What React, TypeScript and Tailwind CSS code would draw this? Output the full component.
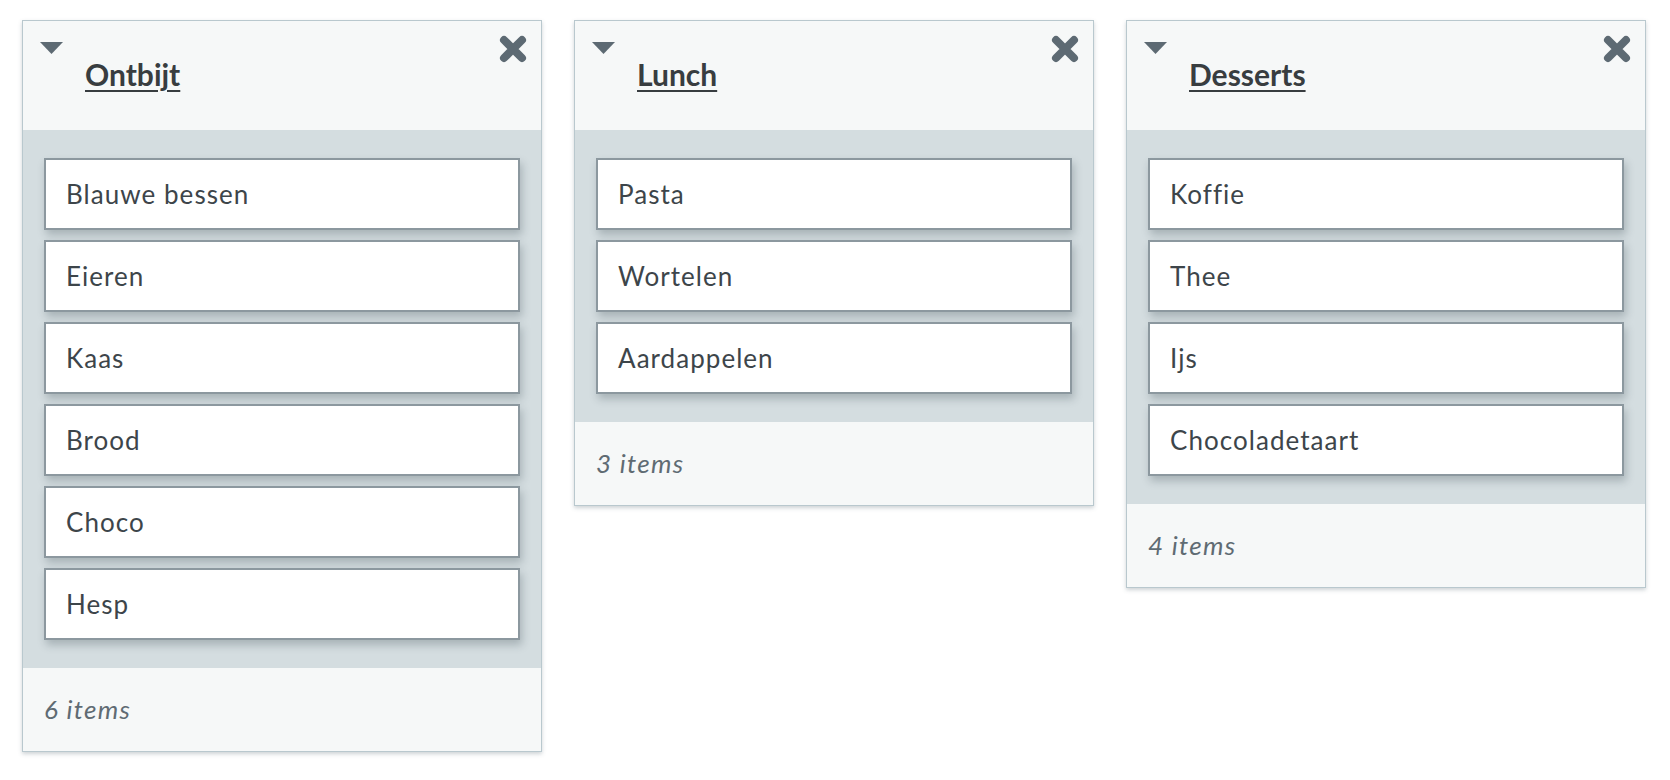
type Column = { id: string; title: string; items: string[] };

const columns: Column[] = [
  { id: "ontbijt", title: "Ontbijt", items: ["Blauwe bessen", "Eieren", "Kaas", "Brood", "Choco", "Hesp"] },
  { id: "lunch", title: "Lunch", items: ["Pasta", "Wortelen", "Aardappelen"] },
  { id: "desserts", title: "Desserts", items: ["Koffie", "Thee", "Ijs", "Chocoladetaart"] },
];

export default function App() {
  return (
    <main className="min-h-screen bg-white font-['Lato',sans-serif] text-[#3d454a]">
      <div className="flex items-start gap-[32px] pl-[22px] pt-[20px]">
        {columns.map((column) => (
          <ColumnCard column={column} key={column.id} />
        ))}
      </div>
    </main>
  );
}

function ColumnCard({ column }: { column: Column }) {
  return (
    <section className="w-[520px] border border-[#b9c8ce] bg-[#f6f8f8] shadow-[0_2px_4px_rgba(60,80,90,0.25)]">
      <header className="flex h-[109px] items-start">
        <button className="ml-[17px] mt-[21px] text-[#5d6a73]" aria-label="Inklappen">
          <svg width="23" height="12" viewBox="0 0 23 12" aria-hidden="true">
            <path d="M0 0H23L11.5 12Z" fill="currentColor" />
          </svg>
        </button>
        <h2 className="ml-[22px] mt-[35px] text-[30px] font-bold leading-[36px] text-[#383d40] underline decoration-2 underline-offset-[4px]">
          {column.title}
        </h2>
        <button className="ml-auto mr-[13px] mt-[13px] text-[#5d6a73]" aria-label="Verwijderen">
          <svg width="30" height="30" viewBox="0 0 30 30" aria-hidden="true">
            <path
              d="M6 6L24 24M24 6L6 24"
              stroke="currentColor"
              strokeWidth="8"
              strokeLinecap="round"
              fill="none"
            />
          </svg>
        </button>
      </header>

      <div className="flex flex-col gap-[10px] bg-[#d4dde0] px-[21px] py-[28px]">
        {column.items.map((item) => (
          <div
            className="flex h-[72px] items-center border-2 border-[#8c989f] bg-white px-[20px] text-[26px] tracking-[0.04em] shadow-[2px_5px_8px_rgba(40,55,65,0.25)]"
            key={item}
          >
            {item}
          </div>
        ))}
      </div>

      <footer className="flex h-[83px] items-center px-[21px] text-[26px] italic tracking-[0.05em] text-[#5f6b73]">
        {column.items.length} items
      </footer>
    </section>
  );
}
